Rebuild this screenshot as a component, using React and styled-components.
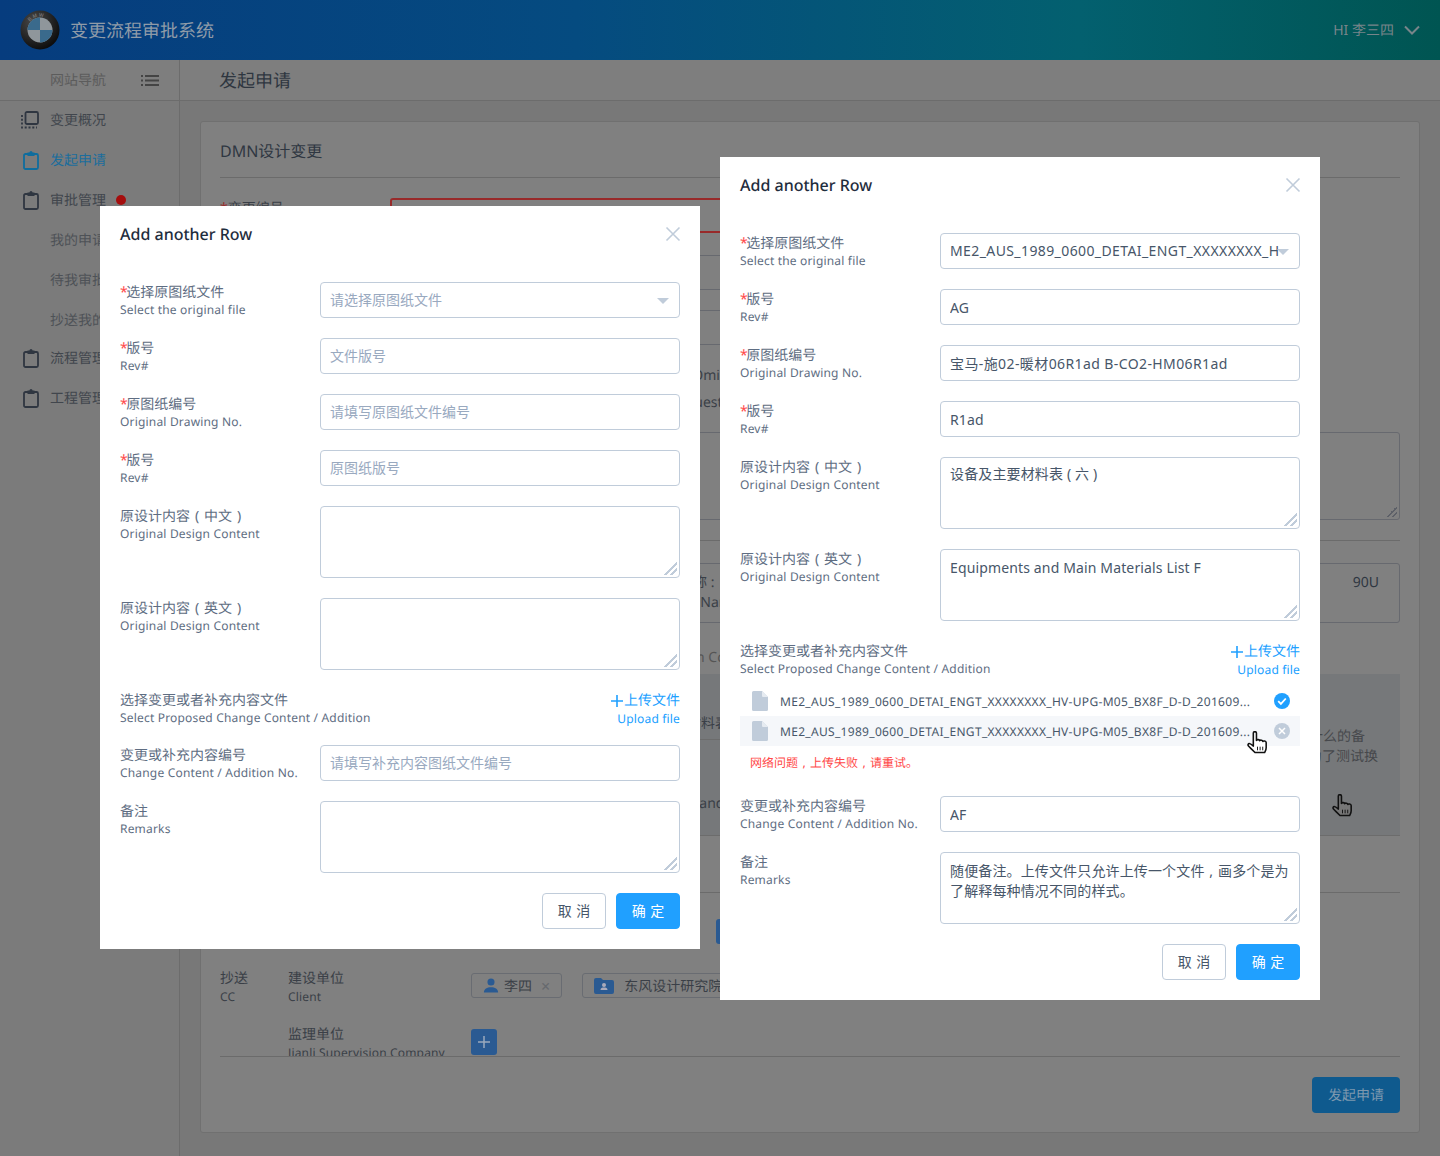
import React from "react";
import styled, { createGlobalStyle } from "styled-components";

const GlobalStyle = createGlobalStyle`
  html, body {
    margin: 0;
    padding: 0;
    background: #787878;
  }
  body {
    font-family: "Noto Sans", "Noto Sans CJK SC", sans-serif;
    font-size: 14px;
    text-rendering: geometricPrecision;
  }
  * {
    box-sizing: border-box;
  }
`;

const Hand = ({ className, fill = "#fff" }) => (
  <svg className={className} width="21" height="23" viewBox="0 0 20 22">
    <path
      d="M6 2.2C6 1.1 6.6.6 7.5.6S9 1.1 9 2.2V9c.4-1 3-1.1 3.2.4.4-1 2.7-.9 2.9.6.5-.7 3-.6 3.2 1v5c0 2.2-.9 3.4-1.5 4.6H7.6C6 19 3.5 16.5 1.6 14.6.4 13.4 1 12 2.2 12c1 0 2.5 1.3 3.8 2.4Z"
      fill={fill}
      stroke="#111"
      strokeWidth="1.5"
      strokeLinejoin="round"
    />
    <path d="M10 15v3.5M12.5 15v3.5M15 15v3.5" stroke="#111" strokeWidth=".9" fill="none" />
  </svg>
);

const NavIcon = styled.svg`
  flex: none;
  margin: 0 ${(p) => (p.$wide ? "1px 0 0" : "1px 0 2px")};
`;

const Clipboard = ({ color = "#2f3641" }) => (
  <NavIcon width="16" height="19" viewBox="0 0 16 19" fill="none">
    <rect x="1" y="3" width="14" height="15" rx="1.5" stroke={color} strokeWidth="1.8" />
    <path d="M4.5 1.5h7V5h-7z" fill={color} />
    <circle cx="8" cy="1.5" r="1.5" fill={color} />
  </NavIcon>
);

const Overview = () => (
  <NavIcon $wide width="18" height="18" viewBox="0 0 18 18" fill="none">
    <rect x="4.5" y="1" width="12.5" height="12" rx="1.5" stroke="#2f3641" strokeWidth="1.8" />
    <path d="M1 4v12.5H16" stroke="#2f3641" strokeWidth="1.8" strokeDasharray="2 1.8" />
  </NavIcon>
);

const BmwLogo = () => (
  <svg width="40" height="40" viewBox="0 0 40 40">
    <defs>
      <radialGradient id="ring" cx="35%" cy="30%" r="80%">
        <stop offset="0" stopColor="#4a4a4a" />
        <stop offset="1" stopColor="#070707" />
      </radialGradient>
      <path id="arc" d="M6.6 20a13.4 13.4 0 0 1 26.8 0" />
    </defs>
    <circle cx="20" cy="20" r="19.5" fill="url(#ring)" />
    <text fontSize="5" fill="#8a8a8a" fontFamily="Liberation Sans" letterSpacing="1.6">
      <textPath href="#arc" startOffset="9">BMW</textPath>
    </text>
    <circle cx="20" cy="20" r="12.5" fill="#8f969b" />
    <path d="M20 20V7.5A12.5 12.5 0 0 0 7.5 20Z" fill="#3a6a8c" />
    <path d="M20 20V32.5A12.5 12.5 0 0 0 32.5 20Z" fill="#3a6a8c" />
  </svg>
);

const Page = styled.div`
  position: relative;
  width: 1440px;
  height: 1156px;
  overflow: hidden;
  color: #3a3f47;
`;

const Header = styled.header`
  height: 60px;
  padding: 0 20px;
  display: flex;
  align-items: center;
  background: linear-gradient(90deg, #063c7e 0%, #054b80 40%, #03606f 75%, #005552 100%);
`;

const Brand = styled.div`
  flex: 1;
  display: flex;
  align-items: center;
  gap: 10px;
  font-size: 18px;
  color: #8f9ba8;
`;

const UserMenu = styled.div`
  display: flex;
  align-items: center;
  gap: 10px;
  color: #78858a;
`;

const Body = styled.div`
  display: flex;
  height: 1096px;
`;

const Sidebar = styled.aside`
  width: 181px;
  background: #7b7b7b;
  border-right: 1px solid #6c6c6c;
`;

const NavHead = styled.div`
  height: 41px;
  padding: 0 20px 0 50px;
  display: flex;
  align-items: center;
  justify-content: space-between;
  border-bottom: 1px solid #6c6c6c;
  background: #7e7e7e;
  color: #5c5c5c;
`;

const NavItem = styled.div`
  height: 40px;
  padding: 0 0 2px 21px;
  display: flex;
  align-items: center;
  gap: 10px;
  margin-top: ${(p) => (p.$tight ? "-2px" : "0")};
  color: ${(p) => (p.$active ? "#1c6d9c" : "#41464d")};
`;

const SubItem = styled.div`
  height: 40px;
  padding: 0 0 2px 50px;
  display: flex;
  align-items: center;
  color: #4e5257;
`;

const RedDot = styled.span`
  width: 10px;
  height: 10px;
  border-radius: 50%;
  background: #a50d0d;
`;

const Main = styled.main`
  flex: 1;
`;

const PageTitle = styled.div`
  height: 41px;
  padding-left: 39px;
  display: flex;
  align-items: center;
  font-size: 18px;
  color: #2e3640;
  background: #7e7e7e;
  border-bottom: 1px solid #6c6c6c;
`;

const Card = styled.section`
  margin: 20px 20px 0;
  height: 1012px;
  padding: 0 19px;
  background: #808080;
  border: 1px solid #707070;
  border-radius: 3px;
`;

const CardTitle = styled.h2`
  margin: 0;
  height: 56px;
  padding-top: 17px;
  font-size: 16px;
  line-height: 24px;
  font-weight: 400;
  color: #2f3742;
  border-bottom: 1px solid #6b6b6b;
`;

const BgInput = styled.div`
  margin: ${(p) => p.$top}px 0 0 170px;
  width: ${(p) => p.$width || 800}px;
  height: ${(p) => p.$height}px;
  border: ${(p) => (p.$error ? "2px solid #982a2a" : "1px solid #67696f")};
  border-radius: 3px;
  display: flex;
  justify-content: flex-end;
  padding: 9px 20px 0 0;
  line-height: 20px;
  color: #2f3742;
  position: relative;
`;

const BgLabel = styled.div`
  position: absolute;
  left: -172px;
  top: -1px;
  line-height: 20px;
  color: #3a3f47;
`;

const BgInputNote = styled.div`
  margin: 0 auto 0 260px;
  color: #3a3f47;
  white-space: nowrap;
`;

const Red = styled.span`
  margin-right: ${(p) => (p.$dim ? "0" : "-1.5px")};
  color: ${(p) => (p.$dim ? "#982a2a" : "#ff4949")};
`;

const BgText = styled.div`
  height: ${(p) => p.$height}px;
  line-height: 20px;
  color: ${(p) => (p.$soft ? "#555" : "#3a3f47")};
  white-space: nowrap;
`;

const BgLine = styled.div`
  padding: ${(p) => p.$top}px 0 0 ${(p) => p.$left}px;
`;

const Resize = styled.span`
  position: absolute;
  right: 2px;
  bottom: 2px;
  width: 10px;
  height: 10px;
  background: linear-gradient(135deg, transparent 45%, #5d6068 45%, #5d6068 58%, transparent 58%, transparent 72%, #5d6068 72%, #5d6068 84%, transparent 84%);
`;

const Divider = styled.div`
  margin-top: ${(p) => p.$top}px;
  height: 1px;
  background: #6b6b6b;
`;

const Band = styled.div`
  margin-top: 11px;
  height: 162px;
  background: #76787a;
  display: grid;
  grid-template-columns: 1fr 260px;
  border-bottom: 1px solid #6c6c6c;
`;

const BandRow = styled.div`
  height: ${(p) => p.$height}px;
  padding: ${(p) => p.$top}px 0 0 397px;
  line-height: 20px;
  color: #3a3f47;
  white-space: nowrap;
  border-bottom: ${(p) => (p.$line ? "1px solid #6c6c6c" : "0")};
`;

const BandNote = styled.div`
  position: relative;
  padding-top: 53px;
  text-align: right;
  line-height: 20px;
  color: #46484c;
`;

const NoteLine = styled.div`
  padding-right: ${(p) => p.$right}px;
  white-space: nowrap;
`;

const NoteHand = styled(Hand)`
  position: absolute;
  left: 192px;
  top: 120px;
`;

const Peek = styled.div`
  margin: 26px 0 0 496px;
  width: 60px;
  height: 25px;
  background: #2a5a92;
  border-radius: 3px;
`;

const CopyRow = styled.div`
  margin-top: ${(p) => p.$top}px;
  height: ${(p) => p.$height}px;
  display: grid;
  grid-template-columns: 68px 183px 1fr;
  overflow: hidden;
`;

const CopyLabel = styled.div`
  font-size: 14px;
  line-height: 18px;
  color: #3a3f47;
  small {
    display: block;
    font-size: 12px;
    letter-spacing: .17px;
  }
`;

const Chips = styled.div`
  display: flex;
  gap: 20px;
  padding-top: 3px;
`;

const Chip = styled.div`
  height: 25px;
  padding: 0 11px;
  display: flex;
  align-items: center;
  gap: ${(p) => p.$gap}px;
  border: 1px solid #696c72;
  border-radius: 3px;
  color: #3a3f47;
  white-space: nowrap;
`;

const ChipClose = styled.span`
  margin-left: 4px;
  color: #66696e;
  font-size: 16px;
`;

const AddBox = styled.div`
  margin-top: 3px;
  width: 26px;
  height: 26px;
  border-radius: 3px;
  background: #2a5a92;
  display: flex;
  align-items: center;
  justify-content: center;
`;

const SubmitBar = styled.div`
  display: flex;
  justify-content: flex-end;
  padding-top: 20px;
`;

const SubmitButton = styled.div`
  width: 88px;
  height: 36px;
  border-radius: 4px;
  background: #0f5a8e;
  color: #7d98ae;
  display: flex;
  align-items: center;
  justify-content: center;
`;

const Modal = styled.div`
  position: absolute;
  left: ${(p) => p.$x}px;
  top: ${(p) => p.$y}px;
  width: 600px;
  padding: 0 20px 20px;
  background: #fff;
  color: #475669;
`;

const ModalHead = styled.div`
  height: 76px;
  display: flex;
  justify-content: space-between;
  padding-top: 16px;
`;

const ModalTitle = styled.h3`
  margin: 0;
  font-size: 16px;
  line-height: 24px;
  font-weight: 500;
  color: #1f2d3d;
`;

const CloseBtn = styled.svg`
  margin: 4px -1px 0 0;
`;

const Fields = styled.div`
  display: flex;
  flex-direction: column;
  gap: 20px;
`;

const FieldRow = styled.div`
  display: grid;
  grid-template-columns: 200px 360px;
`;

const LabelBox = styled.div`
  padding-top: 2px;
  height: 35px;
`;

const LabelCn = styled.div`
  font-size: 14px;
  line-height: 18px;
  color: #5e6d82;
`;

const LabelEn = styled.div`
  font-size: 12px;
  line-height: 16px;
  letter-spacing: .18px;
  color: #5e6d82;
  white-space: nowrap;
`;

// 全角括号和逗号在原图里居中于字格
const Fw = styled.span`
  display: inline-block;
  width: ${(p) => (p.$small ? "12px" : "14px")};
  text-align: center;
`;

const TextInput = styled.input`
  display: block;
  width: 100%;
  height: 36px;
  padding: 0 ${(p) => (p.$select ? "20px" : "9px")} ${(p) => (p.$low ? "0" : "1px")} 9px;
  border: 1px solid #c0ccda;
  border-radius: 4px;
  outline: none;
  font: inherit;
  letter-spacing: ${(p) => p.$track || 0.15}px;
  color: #475669;
  background: #fff;
  &::placeholder {
    color: #99a9bf;
    letter-spacing: 0;
  }
`;

const TextArea = styled.textarea`
  display: block;
  width: 100%;
  height: 72px;
  padding: ${(p) => p.$top || 6}px 9px 4px;
  border: 1px solid #c0ccda;
  border-radius: 4px;
  outline: none;
  font: inherit;
  line-height: 20px;
  letter-spacing: .14px;
  color: #475669;
  &::-webkit-resizer {
    background: linear-gradient(135deg, transparent 48%, #c0ccda 48%, #c0ccda 58%, transparent 58%, transparent 72%, #c0ccda 72%, #c0ccda 82%, transparent 82%) no-repeat 0 0 / 13px 13px;
  }
`;

const SelectWrap = styled.div`
  position: relative;
  &::after {
    content: "";
    position: absolute;
    right: 11px;
    top: 16px;
    border-left: 6px solid transparent;
    border-right: 6px solid transparent;
    border-top: 6px solid #c0ccda;
  }
`;

const UploadRow = styled.div`
  height: 35px;
  display: flex;
  justify-content: space-between;
`;

const UploadLink = styled.div`
  padding-top: 2px;
  text-align: right;
  color: #20a0ff;
  font-size: 14px;
  line-height: 18px;
  display: flex;
  flex-direction: column;
  align-items: flex-end;
  small {
    font-size: 12px;
    line-height: 17px;
    letter-spacing: .17px;
  }
`;

const UploadTop = styled.span`
  display: flex;
  align-items: center;
`;

const FileList = styled.div`
  margin-top: -10px;
  display: flex;
  flex-direction: column;
`;

const FileRow = styled.div`
  position: relative;
  height: 30px;
  padding: 0 10px 0 12px;
  display: flex;
  align-items: center;
  gap: 12px;
  background: ${(p) => (p.$hover ? "#f5f7fa" : "#fff")};
  font-size: 12px;
  color: #475669;
`;

const FileName = styled.span`
  flex: 1;
  white-space: nowrap;
  letter-spacing: .31px;
`;

const RowHand = styled(Hand)`
  position: absolute;
  left: 507px;
  top: 15px;
`;

const UploadError = styled.div`
  height: 30px;
  padding: 7px 0 0 10px;
  font-size: 12px;
  line-height: 20px;
  color: #ff4949;
`;

const Actions = styled.div`
  margin-top: 20px;
  display: flex;
  justify-content: flex-end;
  gap: 10px;
`;

const ActionButton = styled.button`
  width: 64px;
  height: 36px;
  padding: 0 0 2px;
  border-radius: 4px;
  border: 1px solid ${(p) => (p.$primary ? "#20a0ff" : "#c0ccda")};
  background: ${(p) => (p.$primary ? "#20a0ff" : "#fff")};
  color: ${(p) => (p.$primary ? "#fff" : "#475669")};
  font: inherit;
  word-spacing: 1px;
`;

const Field = ({ cn, en, required, children }) => (
  <FieldRow>
    <LabelBox>
      <LabelCn>{required && <Red>*</Red>}{cn}</LabelCn>
      <LabelEn>{en}</LabelEn>
    </LabelBox>
    <div>{children}</div>
  </FieldRow>
);

const Upload = () => (
  <UploadRow>
    <LabelBox>
      <LabelCn>选择变更或者补充内容文件</LabelCn>
      <LabelEn>Select Proposed Change Content / Addition</LabelEn>
    </LabelBox>
    <UploadLink>
      <UploadTop>
        <svg width="14" height="14" viewBox="0 0 14 14" stroke="#20a0ff" strokeWidth="1.6">
          <path d="M7 1v12M1 7h12" />
        </svg>
        上传文件
      </UploadTop>
      <small>Upload file</small>
    </UploadLink>
  </UploadRow>
);

const Close = () => (
  <CloseBtn width="16" height="16" viewBox="0 0 16 16" stroke="#c0ccda" strokeWidth="1.6">
    <path d="M1.5 1.5l13 13M14.5 1.5l-13 13" />
  </CloseBtn>
);

const FileIcon = () => (
  <svg width="16" height="20" viewBox="0 0 16 20">
    <path d="M1.5 0H10l6 6v12.5a1.5 1.5 0 0 1-1.5 1.5h-13A1.5 1.5 0 0 1 0 18.5v-17A1.5 1.5 0 0 1 1.5 0Z" fill="#c0ccda" />
    <path d="M10 0v5a1 1 0 0 0 1 1h5Z" fill="#e6ebf1" />
  </svg>
);

const StatusIcon = ({ ok }) => (
  <svg width="16" height="16" viewBox="0 0 16 16" fill="none">
    <circle cx="8" cy="8" r="8" fill={ok ? "#20a0ff" : "#c0ccda"} />
    {ok ? (
      <path d="M4.2 8.2l2.7 2.7 4.9-5.4" stroke="#fff" strokeWidth="1.8" />
    ) : (
      <path d="M5 5l6 6M11 5l-6 6" stroke="#fff" strokeWidth="1.5" />
    )}
  </svg>
);

const Actionbar = () => (
  <Actions>
    <ActionButton>取 消</ActionButton>
    <ActionButton $primary>确 定</ActionButton>
  </Actions>
);

const fileName = "ME2_AUS_1989_0600_DETAI_ENGT_XXXXXXXX_HV-UPG-M05_BX8F_D-D_201609...";

const zhDesign = <>原设计内容<Fw>(</Fw>中文<Fw>)</Fw></>;
const enDesign = <>原设计内容<Fw>(</Fw>英文<Fw>)</Fw></>;

const EmptyModal = () => (
  <Modal $x={100} $y={206}>
    <ModalHead>
      <ModalTitle>Add another Row</ModalTitle>
      <Close />
    </ModalHead>
    <Fields>
      <Field required cn="选择原图纸文件" en="Select the original file">
        <SelectWrap><TextInput $select readOnly placeholder="请选择原图纸文件" /></SelectWrap>
      </Field>
      <Field required cn="版号" en="Rev#"><TextInput readOnly placeholder="文件版号" /></Field>
      <Field required cn="原图纸编号" en="Original Drawing No."><TextInput readOnly placeholder="请填写原图纸文件编号" /></Field>
      <Field required cn="版号" en="Rev#"><TextInput readOnly placeholder="原图纸版号" /></Field>
      <Field cn={zhDesign} en="Original Design Content"><TextArea readOnly /></Field>
      <Field cn={enDesign} en="Original Design Content"><TextArea readOnly /></Field>
      <Upload />
      <Field cn="变更或补充内容编号" en="Change Content / Addition No."><TextInput readOnly placeholder="请填写补充内容图纸文件编号" /></Field>
      <Field cn="备注" en="Remarks"><TextArea readOnly /></Field>
    </Fields>
    <Actionbar />
  </Modal>
);

const FilledModal = () => (
  <Modal $x={720} $y={157}>
    <ModalHead>
      <ModalTitle>Add another Row</ModalTitle>
      <Close />
    </ModalHead>
    <Fields>
      <Field required cn="选择原图纸文件" en="Select the original file">
        <SelectWrap><TextInput $select $track={0.4} readOnly value="ME2_AUS_1989_0600_DETAI_ENGT_XXXXXXXX_HV-UPG-M05_BX8F_D-D_201609" /></SelectWrap>
      </Field>
      <Field required cn="版号" en="Rev#"><TextInput $low readOnly value="AG" /></Field>
      <Field required cn="原图纸编号" en="Original Drawing No."><TextInput $track={0.4} readOnly value="宝马-施02-暖材06R1ad B-CO2-HM06R1ad" /></Field>
      <Field required cn="版号" en="Rev#"><TextInput $low readOnly value="R1ad" /></Field>
      <Field cn={zhDesign} en="Original Design Content"><TextArea readOnly value="设备及主要材料表 ( 六 )" /></Field>
      <Field cn={enDesign} en="Original Design Content"><TextArea $top={8} readOnly value="Equipments and Main Materials List F" /></Field>
      <Upload />
      <FileList>
        <FileRow>
          <FileIcon />
          <FileName>{fileName}</FileName>
          <StatusIcon ok />
        </FileRow>
        <FileRow $hover>
          <FileIcon />
          <FileName>{fileName}</FileName>
          <StatusIcon />
          <RowHand />
        </FileRow>
        <UploadError>网络问题<Fw $small>,</Fw>上传失败<Fw $small>,</Fw>请重试。</UploadError>
      </FileList>
      <Field cn="变更或补充内容编号" en="Change Content / Addition No."><TextInput $low readOnly value="AF" /></Field>
      <Field cn="备注" en="Remarks"><TextArea $top={8} readOnly value={"随便备注。上传文件只允许上传一个文件\u2004,\u2004画多个是为了解释每种情况不同的样式。"} /></Field>
    </Fields>
    <Actionbar />
  </Modal>
);

export default function App() {
  return (
    <>
      <GlobalStyle />
      <Page>
        <Header>
          <Brand><BmwLogo />变更流程审批系统</Brand>
          <UserMenu>
            HI 李三四
            <svg width="16" height="10" viewBox="0 0 16 10" fill="none" stroke="#78858a" strokeWidth="2">
              <path d="M1 1.5l7 7 7-7" />
            </svg>
          </UserMenu>
        </Header>
        <Body>
          <Sidebar>
            <NavHead>
              网站导航
              <svg width="18" height="11" viewBox="0 0 18 11" fill="#444">
                <path d="M0 0h2v2H0zM4 0h14v2H4zM0 4.5h2v2H0zM4 4.5h14v2H4zM0 9h2v2H0zM4 9h14v2H4z" />
              </svg>
            </NavHead>
            <NavItem><Overview />变更概况</NavItem>
            <NavItem $active><Clipboard color="#0f6d9e" />发起申请</NavItem>
            <NavItem><Clipboard />审批管理<RedDot /></NavItem>
            <SubItem>我的申请</SubItem>
            <SubItem>待我审批</SubItem>
            <SubItem>抄送我的</SubItem>
            <NavItem $tight><Clipboard />流程管理</NavItem>
            <NavItem><Clipboard />工程管理</NavItem>
          </Sidebar>
          <Main>
            <PageTitle>发起申请</PageTitle>
            <Card>
              <CardTitle>DMN设计变更</CardTitle>
              <BgInput $top={20} $height={35} $error>
                <BgLabel><Red $dim>*</Red>变更编号</BgLabel>
              </BgInput>
              <BgInput $top={22} $height={35} />
              <BgInput $top={20} $height={35} />
              <BgText $height={87}>
                <BgLine $left={423} $top={21}>Design Omission</BgLine>
                <BgLine $left={378} $top={7}>Change of Request</BgLine>
              </BgText>
              <BgInput $top={0} $width={1010} $height={88}><Resize /></BgInput>
              <Divider $top={20} />
              <BgInput $top={22} $width={1010} $height={60}>
                <BgInputNote>项目名称 :<br />Project Name</BgInputNote>
                90U
              </BgInput>
              <BgText $height={40} $soft>
                <BgLine $left={439} $top={25}>Design Content</BgLine>
              </BgText>
              <Band>
                <div>
                  <BandRow $height={66} $top={40} $line>设备及主要材料表</BandRow>
                  <BandRow $height={96} $top={54}>Equipments and Main</BandRow>
                </div>
                <BandNote>
                  <NoteLine $right={35}>这里可以写点什么的备</NoteLine>
                  <NoteLine $right={22}>注，主要为了测试换</NoteLine>
                  <NoteHand fill="#777" />
                </BandNote>
              </Band>
              <Divider $top={56} />
              <Peek />
              <CopyRow $top={26} $height={40}>
                <CopyLabel>抄送<small>CC</small></CopyLabel>
                <CopyLabel>建设单位<small>Client</small></CopyLabel>
                <Chips>
                  <Chip $gap={5}>
                    <svg width="16" height="15" viewBox="0 0 18 16" fill="#2a5a92">
                      <circle cx="9" cy="4" r="4" />
                      <path d="M1 16c0-4 3.5-6 8-6s8 2 8 6Z" />
                    </svg>
                    李四<ChipClose>×</ChipClose>
                  </Chip>
                  <Chip $gap={10}>
                    <svg width="20" height="16" viewBox="0 0 20 16">
                      <path d="M0 2a2 2 0 0 1 2-2h5l2 2h9a2 2 0 0 1 2 2v10a2 2 0 0 1-2 2H2a2 2 0 0 1-2-2Z" fill="#2a5a92" />
                      <circle cx="10" cy="7" r="2" fill="#aab" />
                      <path d="M6.5 12c0-2 1.5-2.5 3.5-2.5s3.5.5 3.5 2.5Z" fill="#aab" />
                    </svg>
                    东风设计研究院有限公司
                  </Chip>
                </Chips>
              </CopyRow>
              <CopyRow $top={16} $height={30}>
                <span />
                <CopyLabel>监理单位<small>Jianli Supervision Company</small></CopyLabel>
                <AddBox>
                  <svg width="12" height="12" viewBox="0 0 12 12" stroke="#9aa9bd" strokeWidth="1.5"><path d="M6 0v12M0 6h12" /></svg>
                </AddBox>
              </CopyRow>
              <Divider $top={0} />
              <SubmitBar><SubmitButton>发起申请</SubmitButton></SubmitBar>
            </Card>
          </Main>
        </Body>
        <EmptyModal />
        <FilledModal />
      </Page>
    </>
  );
}
